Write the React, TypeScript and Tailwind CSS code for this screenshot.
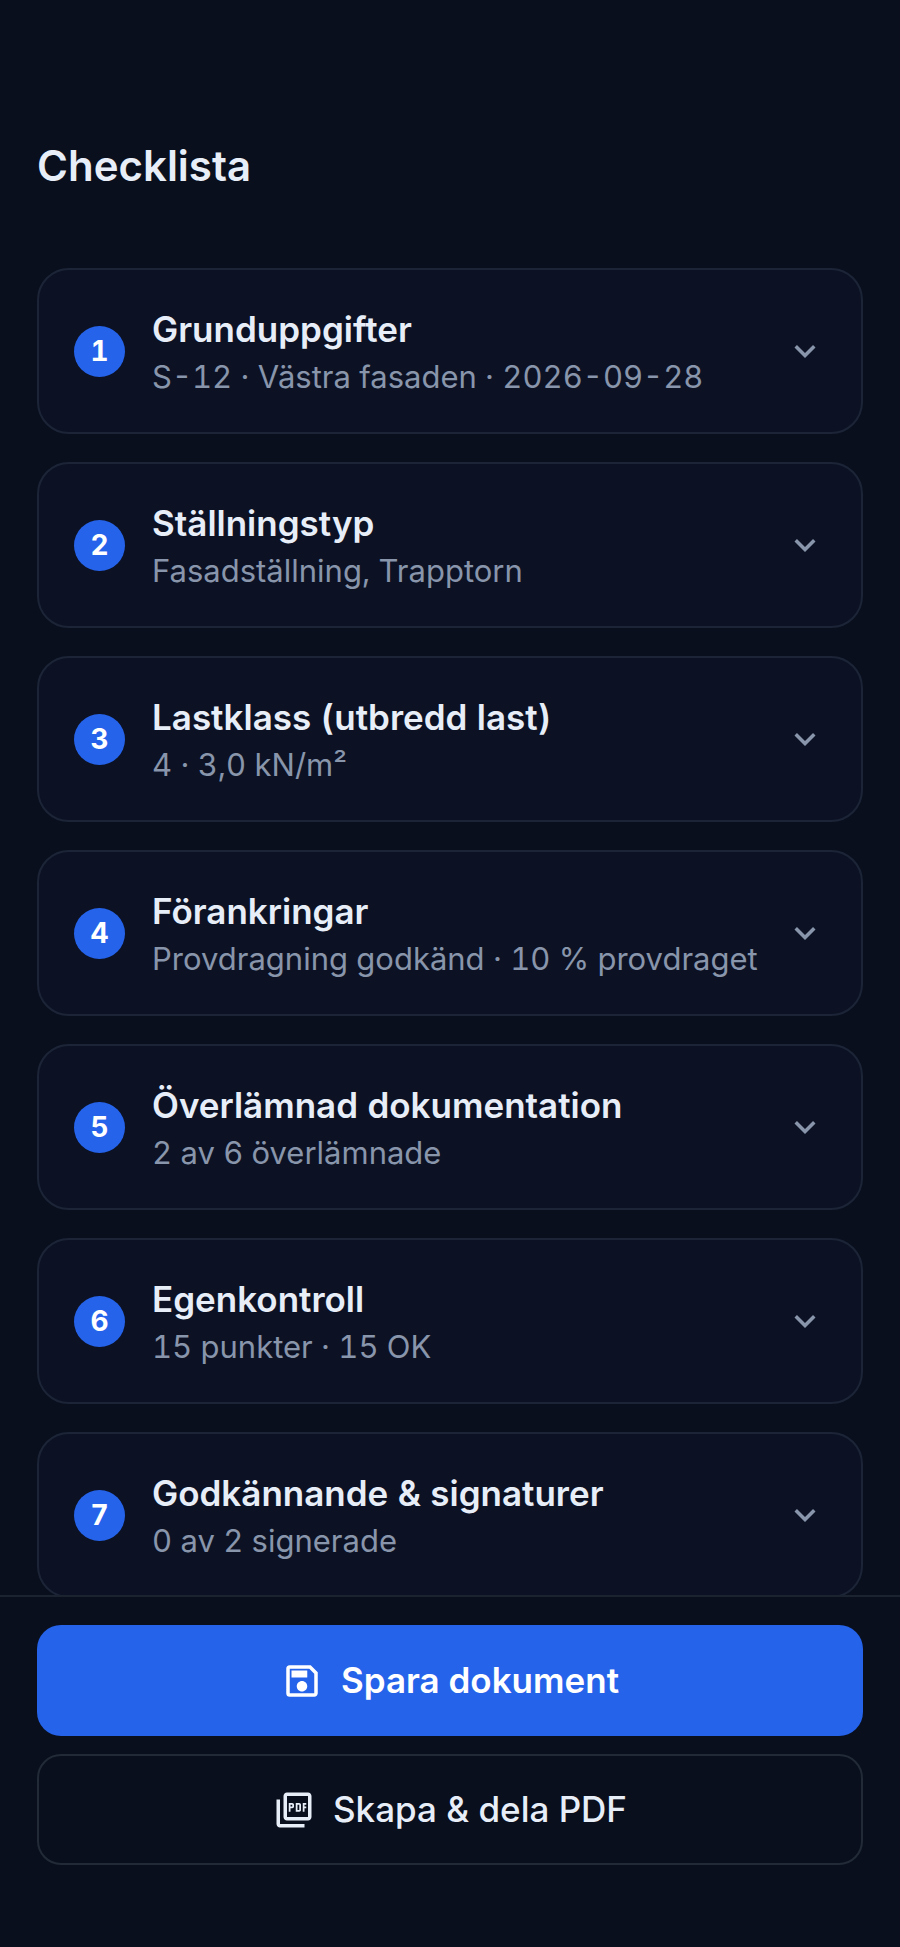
import { useState } from 'react';
import { MdExpandMore, MdOutlinePictureAsPdf, MdOutlineSave } from 'react-icons/md';

interface Section {
  id: number;
  title: string;
  summary: string;
}

const sections: Section[] = [
  { id: 1, title: 'Grunduppgifter', summary: 'S-12 · Västra fasaden · 2026-09-28' },
  { id: 2, title: 'Ställningstyp', summary: 'Fasadställning, Trapptorn' },
  { id: 3, title: 'Lastklass (utbredd last)', summary: '4 · 3,0 kN/m²' },
  { id: 4, title: 'Förankringar', summary: 'Provdragning godkänd · 10 % provdraget' },
  { id: 5, title: 'Överlämnad dokumentation', summary: '2 av 6 överlämnade' },
  { id: 6, title: 'Egenkontroll', summary: '15 punkter · 15 OK' },
  { id: 7, title: 'Godkännande & signaturer', summary: '0 av 2 signerade' },
];

interface SectionCardProps {
  section: Section;
  isOpen: boolean;
  onToggle: () => void;
}

const SectionCard = ({ section, isOpen, onToggle }: SectionCardProps) => (
  <li>
    <button
      type="button"
      aria-expanded={isOpen}
      onClick={onToggle}
      className="flex w-full cursor-pointer items-center gap-[27px] rounded-[32px] border-2 border-[#1c2537] bg-[#0c1224] px-[35px] py-[33px] text-left tabular-nums"
    >
      <span className="flex size-[51px] shrink-0 items-center justify-center rounded-full bg-[#2563eb] text-[28px] leading-none font-bold text-white">
        {section.id}
      </span>
      <span className="min-w-0 flex-1">
        <span className="block text-[35px] leading-[52px] font-semibold whitespace-nowrap text-[#e8eef8]">
          {section.title}
        </span>
        <span className="block text-[31px] leading-[44px] whitespace-nowrap text-[#8895ab]">
          {section.summary}
        </span>
      </span>
      <MdExpandMore className={`size-[42px] shrink-0 text-[#8895ab] ${isOpen ? 'rotate-180' : ''}`} />
    </button>
  </li>
);

const App = () => {
  const [openId, setOpenId] = useState<number | null>(null);

  return (
    <div className="flex h-screen flex-col bg-[#090f1d] font-['Inter',sans-serif]">
      <header className="shrink-0 px-[37px] pt-[134px] pb-[70px]">
        <h1 className="text-[42px] leading-[64px] font-semibold text-[#e8eef8]">Checklista</h1>
      </header>

      <main className="min-h-0 flex-1 overflow-hidden px-[37px]">
        <ul className="flex flex-col gap-7">
          {sections.map((section) => (
            <SectionCard
              key={section.id}
              section={section}
              isOpen={openId === section.id}
              onToggle={() => setOpenId(openId === section.id ? null : section.id)}
            />
          ))}
        </ul>
      </main>

      <footer className="flex shrink-0 flex-col gap-[18px] border-t-2 border-[#1b2230] px-[37px] pt-7 pb-[82px]">
        <button
          type="button"
          className="flex h-[111px] w-full cursor-pointer items-center justify-center gap-[18px] rounded-3xl bg-[#2563eb] text-[35px] font-semibold text-white"
        >
          <MdOutlineSave className="size-[42px]" />
          Spara dokument
        </button>
        <button
          type="button"
          className="flex h-[111px] w-full cursor-pointer items-center justify-center gap-[18px] rounded-3xl border-2 border-[#222a38] text-[35px] font-medium text-[#e8eef8]"
        >
          <MdOutlinePictureAsPdf className="size-[42px]" />
          Skapa &amp; dela PDF
        </button>
      </footer>
    </div>
  );
};

export default App;
